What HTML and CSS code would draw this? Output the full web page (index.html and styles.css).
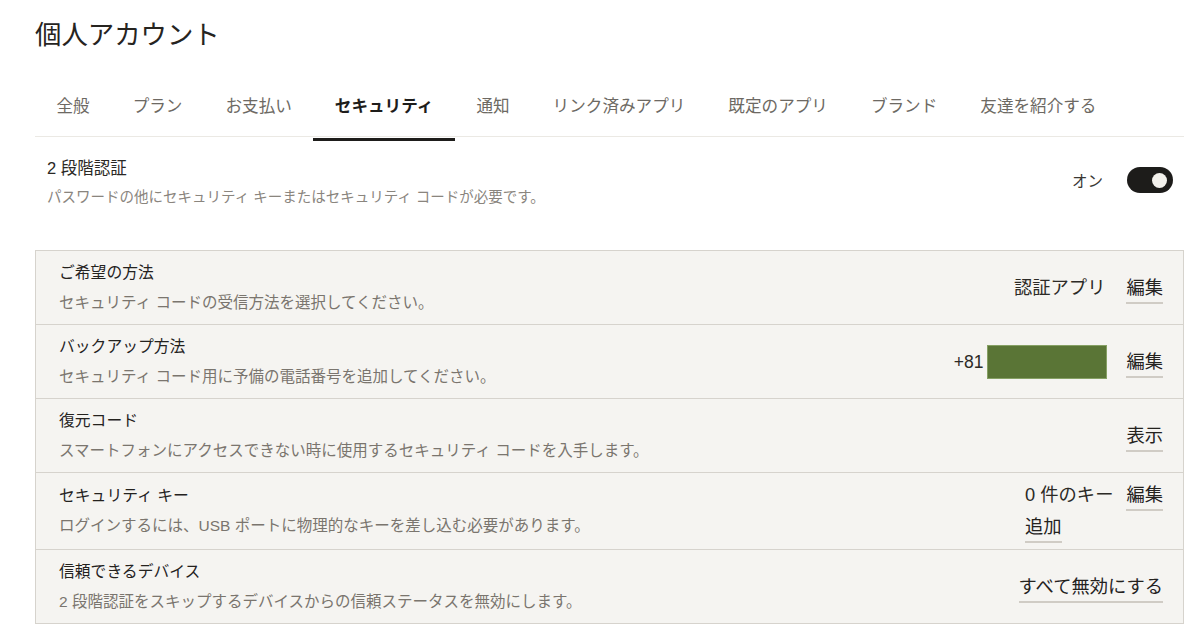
FILE: index.html
```html
<!DOCTYPE html>
<html lang="ja">
<head>
<meta charset="utf-8">
<title>個人アカウント</title>
<link rel="stylesheet" href="styles.css">
</head>
<body>
<div class="page">
  <h1 class="title">個人アカウント</h1>
  <nav class="tabs">
    <a class="tab">全般</a>
    <a class="tab">プラン</a>
    <a class="tab">お支払い</a>
    <a class="tab active">セキュリティ</a>
    <a class="tab">通知</a>
    <a class="tab">リンク済みアプリ</a>
    <a class="tab">既定のアプリ</a>
    <a class="tab">ブランド</a>
    <a class="tab">友達を紹介する</a>
  </nav>

  <section class="twofa">
    <div class="twofa-text">
      <div class="twofa-title">2 段階認証</div>
      <div class="twofa-desc">パスワードの他にセキュリティ キーまたはセキュリティ コードが必要です。</div>
    </div>
    <div class="twofa-toggle">
      <span class="toggle-label">オン</span>
      <span class="switch"><span class="knob"></span></span>
    </div>
  </section>

  <div class="table">
    <div class="row">
      <div class="row-text">
        <div class="row-title">ご希望の方法</div>
        <div class="row-desc">セキュリティ コードの受信方法を選択してください。</div>
      </div>
      <div class="actions">
        <span class="value">認証アプリ</span>
        <a class="link">編集</a>
      </div>
    </div>
    <div class="row">
      <div class="row-text">
        <div class="row-title">バックアップ方法</div>
        <div class="row-desc">セキュリティ コード用に予備の電話番号を追加してください。</div>
      </div>
      <div class="actions">
        <span class="value phone">+81<span class="redact"></span></span>
        <a class="link">編集</a>
      </div>
    </div>
    <div class="row">
      <div class="row-text">
        <div class="row-title">復元コード</div>
        <div class="row-desc">スマートフォンにアクセスできない時に使用するセキュリティ コードを入手します。</div>
      </div>
      <div class="actions">
        <a class="link">表示</a>
      </div>
    </div>
    <div class="row">
      <div class="row-text">
        <div class="row-title">セキュリティ キー</div>
        <div class="row-desc">ログインするには、USB ポートに物理的なキーを差し込む必要があります。</div>
      </div>
      <div class="actions stacked">
        <div class="actions-line">
          <span class="value">0 件のキー</span>
          <a class="link">編集</a>
        </div>
        <div class="actions-line">
          <a class="link">追加</a>
        </div>
      </div>
    </div>
    <div class="row">
      <div class="row-text">
        <div class="row-title">信頼できるデバイス</div>
        <div class="row-desc">2 段階認証をスキップするデバイスからの信頼ステータスを無効にします。</div>
      </div>
      <div class="actions">
        <a class="link">すべて無効にする</a>
      </div>
    </div>
  </div>
</div>
</body>
</html>
```

FILE: styles.css
```css
* { box-sizing: border-box; }

html, body {
  margin: 0;
  padding: 0;
  background: #ffffff;
}

body {
  font-family: "Liberation Sans", "Noto Sans CJK JP", sans-serif;
  color: #2a2824;
}

.page {
  margin: 0 16px 0 35px;
}

.title {
  margin: 0;
  padding-top: 17px;
  font-size: 26.4px;
  line-height: 36px;
  font-weight: 400;
  color: #26241f;
}

.tabs {
  display: flex;
  margin-top: 30px;
  border-bottom: 1px solid #ebe9e4;
}

.tab {
  position: relative;
  padding: 12px 21.5px 17px;
  font-size: 16.6px;
  line-height: 24px;
  color: #6d6963;
  font-weight: 400;
  white-space: nowrap;
}

.tab.active {
  color: #1e1d1b;
  font-weight: 700;
}

.tab.active::after {
  content: "";
  position: absolute;
  left: 0;
  right: 0;
  top: calc(100% + 2px);
  height: 3px;
  background: #1e1d1b;
}

.twofa {
  display: flex;
  align-items: center;
  justify-content: space-between;
  padding: 0 11px 0 12px;
  margin-top: 19px;
}

.twofa-title {
  font-size: 16.5px;
  line-height: 24px;
  color: #2a2824;
}

.twofa-desc {
  margin-top: 6px;
  font-size: 14.5px;
  line-height: 22px;
  color: #8a857e;
}

.twofa-toggle {
  display: flex;
  align-items: center;
  gap: 24px;
  margin-top: -4px;
}

.toggle-label {
  margin-top: 4px;
  font-size: 15.5px;
  line-height: 22px;
  color: #3a3834;
}

.switch {
  display: flex;
  justify-content: flex-end;
  align-items: center;
  width: 46px;
  height: 26px;
  padding: 0 6px;
  border-radius: 13px;
  background: #1d1c1a;
}

.knob {
  width: 15px;
  height: 15px;
  border-radius: 50%;
  background: #f3f1ec;
}

.table {
  margin-top: 42px;
  background: #f5f4f1;
  border: 1px solid #d6d3cd;
}

.row {
  display: flex;
  align-items: center;
  justify-content: space-between;
  min-height: 74px;
  padding: 6px 20px 6px 23px;
  border-top: 1px solid #d6d3cd;
}

.row:first-child {
  border-top: none;
  min-height: 73px;
}

.row-title {
  font-size: 15.8px;
  line-height: 22px;
  font-weight: 400;
  color: #24221e;
}

.row-desc {
  margin-top: 8px;
  font-size: 15.5px;
  line-height: 22px;
  color: #7a756e;
}

.actions {
  display: flex;
  align-items: center;
  gap: 21px;
  font-size: 18.3px;
  line-height: 22px;
}

.actions.stacked {
  flex-direction: column;
  align-items: flex-start;
  gap: 0;
}

.actions-line {
  display: flex;
  align-items: center;
  gap: 13px;
}

.value {
  color: #2c2a26;
  white-space: nowrap;
}

.phone {
  display: flex;
  align-items: center;
  gap: 4px;
  margin-right: -2px;
  font-size: 17.5px;
}

.redact {
  display: block;
  width: 120px;
  height: 34px;
  background: #5a7536;
  border: 1px solid #86a064;
}

.link {
  display: block;
  padding: 5px 0 3px;
  border-bottom: 2px solid #d0ccc5;
  color: #24221e;
  font-weight: 400;
  white-space: nowrap;
}
```
